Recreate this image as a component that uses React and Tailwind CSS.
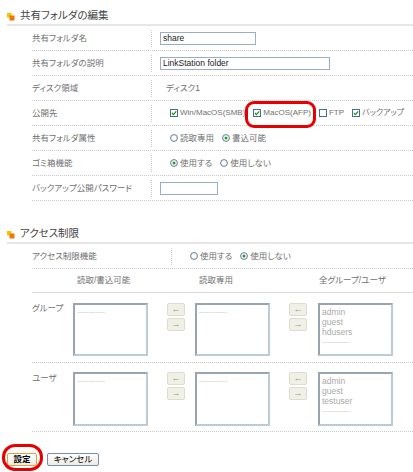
import React from "react";

// Small orange/yellow section marker
const Marker = () => (
  <svg width="8" height="8" viewBox="0 0 8 8" className="shrink-0">
    <rect x="0" y="0" width="4.5" height="4.5" fill="#f5c400" />
    <rect x="2.5" y="2.5" width="5" height="5" fill="#f07800" />
  </svg>
);

const SectionHeader = ({ title, className = "" }) => (
  <div
    className={`ml-[7px] h-[26px] flex items-end gap-[5px] pb-[2px] border-b-2 border-[#e6e6e6] ${className}`}
  >
    <div className="mb-[1px]">
      <Marker />
    </div>
    <span className="text-[10.5px] leading-[13px] text-[#444]">{title}</span>
  </div>
);

const CheckBox = ({ checked }) => (
  <svg width="8" height="8" viewBox="0 0 8 8" className="shrink-0">
    <rect x="0.5" y="0.5" width="7" height="7" fill="#fff" stroke="#4a6a90" />
    {checked && (
      <path d="M2 4 L3.4 5.6 L6.2 2.3" fill="none" stroke="#1a9a1a" strokeWidth="1.3" />
    )}
  </svg>
);

const Radio = ({ checked }) => (
  <svg width="8" height="8" viewBox="0 0 8 8" className="shrink-0">
    <circle cx="4" cy="4" r="3.4" fill="#fff" stroke="#4a6a90" strokeWidth="0.9" />
    {checked && <circle cx="4" cy="4" r="1.5" fill="#22a022" />}
  </svg>
);

const Row = ({ label, labelWidth = "w-[120px]", children, pad = "pl-[8px]" }) => (
  <div className="h-[25px] flex border-b border-dotted border-[#c8c8c8]">
    <div className={`${labelWidth} shrink-0 flex items-center`}>
      <span className="flex-1">{label}</span>
      <div className="h-[17px] border-r border-dotted border-[#c8c8c8]" />
    </div>
    <div className={`flex-1 flex items-center ${pad}`}>{children}</div>
  </div>
);

const TextBox = ({ value, width }) => (
  <div
    className={`${width} h-[13px] border border-[#98aec4] bg-white px-[2px] text-[8.5px] leading-[11px] text-[#222]`}
  >
    {value}
  </div>
);

const ListBox = ({ items }) => (
  <div className="w-[75px] h-full border-2 border-t-[#98a4b0] border-l-[#98a4b0] border-r-[#bccbd8] border-b-[#bccbd8] bg-white px-[2px] pt-[2px] text-[8.5px] leading-[10px] text-[#aaa]">
    {items.map((t, i) => (
      <div key={i} className={t.startsWith("-") ? "text-[7px] text-[#c4c4c4]" : ""}>
        {t}
      </div>
    ))}
  </div>
);

const Arrows = () => (
  <div className="w-[18px] flex flex-col gap-[2px]">
    {["←", "→"].map(a => (
      <div
        key={a}
        className="h-[13px] rounded-[2px] border border-[#dcdccf] bg-[#f0f0e6] flex items-center justify-center text-[9px] leading-none text-[#999]"
      >
        {a}
      </div>
    ))}
  </div>
);

const Opt = ({ children, first }) => (
  <div className={`flex items-center gap-[2px] shrink-0 ${first ? "" : "ml-[8px]"}`}>{children}</div>
);

const DASH = "------------";

export default function App() {
  return (
    <div className="relative w-[413px] h-[472px] bg-white whitespace-nowrap text-[8.5px] text-[#707070] [font-family:'Liberation_Sans','Noto_Sans_CJK_JP',sans-serif] [font-feature-settings:'palt'] overflow-hidden">
      <SectionHeader title="共有フォルダの編集" />

      <div className="ml-[32px]">
        <Row label="共有フォルダ名">
          <TextBox value="share" width="w-[96px]" />
        </Row>
        <Row label="共有フォルダの説明">
          <TextBox value="LinkStation folder" width="w-[170px]" />
        </Row>
        <Row label="ディスク領域" pad="pl-[14px]">
          <span>ディスク1</span>
        </Row>
        <Row label="公開先" pad="pl-[18px]">
          <div className="flex items-center text-[8px]">
            <Opt first><CheckBox checked /><span>Win/MacOS(SMB)</span></Opt>
            <Opt><CheckBox checked /><span>MacOS(AFP)</span></Opt>
            <Opt><CheckBox /><span>FTP</span></Opt>
            <Opt><CheckBox checked /><span>バックアップ</span></Opt>
          </div>
        </Row>
        <Row label="共有フォルダ属性" pad="pl-[18px]">
          <div className="flex items-center">
            <Opt first><Radio /><span>読取専用</span></Opt>
            <Opt><Radio checked /><span>書込可能</span></Opt>
          </div>
        </Row>
        <Row label="ゴミ箱機能" pad="pl-[18px]">
          <div className="flex items-center">
            <Opt first><Radio checked /><span>使用する</span></Opt>
            <Opt><Radio /><span>使用しない</span></Opt>
          </div>
        </Row>
        <Row label="バックアップ公開パスワード">
          <TextBox value="" width="w-[58px]" />
        </Row>
      </div>

      <SectionHeader title="アクセス制限" className="mt-[17px]" />

      <div className="ml-[32px]">
        <Row label="アクセス制限機能" labelWidth="w-[140px]" pad="pl-[18px]">
          <div className="flex items-center">
            <Opt first><Radio /><span>使用する</span></Opt>
            <Opt><Radio checked /><span>使用しない</span></Opt>
          </div>
        </Row>

        {/* column headings */}
        <div className="h-[24px] flex items-center border-b border-[#dcdcdc]">
          <div className="w-[45px]" />
          <div className="w-[122px]">読取/書込可能</div>
          <div className="w-[120px]">読取専用</div>
          <div>全グループ/ユーザ</div>
        </div>

        <div className="h-[70px] flex pt-[10px] pb-[6px] border-b border-dotted border-[#c8c8c8]">
          <div className="w-[41px] leading-[10px]">グループ</div>
          <ListBox items={[DASH]} />
          <div className="ml-[19px]"><Arrows /></div>
          <div className="ml-[10px]"><ListBox items={[DASH]} /></div>
          <div className="ml-[19px]"><Arrows /></div>
          <div className="ml-[11px]"><ListBox items={["admin", "guest", "hdusers", DASH]} /></div>
        </div>

        <div className="h-[69px] flex pt-[9px] pb-[5px] border-b border-dotted border-[#c8c8c8]">
          <div className="w-[41px] pt-[1px] leading-[10px]">ユーザ</div>
          <ListBox items={[DASH]} />
          <div className="ml-[19px]"><Arrows /></div>
          <div className="ml-[10px]"><ListBox items={[DASH]} /></div>
          <div className="ml-[19px]"><Arrows /></div>
          <div className="ml-[11px]"><ListBox items={["admin", "guest", "testuser", DASH]} /></div>
        </div>
      </div>

      <div className="ml-[7px] mt-[21px] flex gap-[10px]">
        <button className="w-[30px] h-[13px] border border-[#e0a040] rounded-[2px] bg-gradient-to-b from-white to-[#ecebe3] text-[8.5px] leading-none text-black font-bold">
          設定
        </button>
        <button className="w-[52px] h-[13px] border border-[#7a8ea8] rounded-[2px] bg-gradient-to-b from-white to-[#ecebe3] text-[8.5px] leading-none text-black">
          キャンセル
        </button>
      </div>

      {/* red annotation marks */}
      <div className="absolute left-[245px] top-[101px] w-[71px] h-[27px] border-[3px] border-[#e80000] rounded-[9px]" />
      <div className="absolute left-[2px] top-[444px] w-[41px] h-[27px] border-[3px] border-[#e80000] rounded-[13px]" />
    </div>
  );
}
